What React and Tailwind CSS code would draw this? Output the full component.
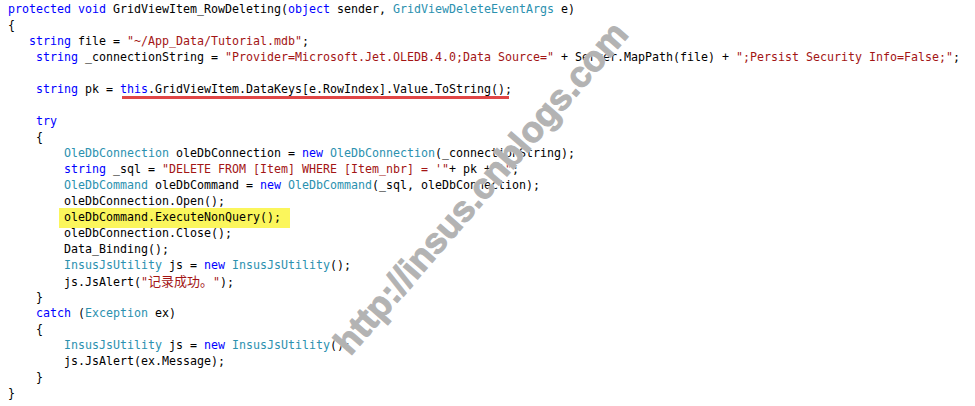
import React from "react";

const K = "text-[#0000ff]";
const T = "text-[#2b91af]";
const S = "text-[#a31515]";

// each line: indent + list of [text, colorClass]
const lines = [
  [0, [["protected void ", K], ["GridViewItem_RowDeleting(", ""], ["object", K], [" sender, ", ""], ["GridViewDeleteEventArgs", T], [" e)", ""]]],
  [0, [["{", ""]]],
  [3, [["string", K], [" file = ", ""], ['"~/App_Data/Tutorial.mdb"', S], [";", ""]]],
  [4, [["string", K], [" _connectionString = ", ""], ['"Provider=Microsoft.Jet.OLEDB.4.0;Data Source="', S], [" + Server.MapPath(file) + ", ""], ['";Persist Security Info=False;"', S], [";", ""]]],
  [0, []],
  [4, "pk"],
  [0, []],
  [4, [["try", K]]],
  [4, [["{", ""]]],
  [8, [["OleDbConnection", T], [" oleDbConnection = ", ""], ["new", K], [" ", ""], ["OleDbConnection", T], ["(_connectionString);", ""]]],
  [8, [["string", K], [" _sql = ", ""], ['"DELETE FROM [Item] WHERE [Item_nbr] = \'"', S], ["+ pk +", ""], ['"\'"', S], [";", ""]]],
  [8, [["OleDbCommand", T], [" oleDbCommand = ", ""], ["new", K], [" ", ""], ["OleDbCommand", T], ["(_sql, oleDbConnection);", ""]]],
  [8, [["oleDbConnection.Open();", ""]]],
  [8, "hl"],
  [8, [["oleDbConnection.Close();", ""]]],
  [8, [["Data_Binding();", ""]]],
  [8, [["InsusJsUtility", T], [" js = ", ""], ["new", K], [" ", ""], ["InsusJsUtility", T], ["();", ""]]],
  [8, "cjk"],
  [4, [["}", ""]]],
  [4, [["catch", K], [" (", ""], ["Exception", T], [" ex)", ""]]],
  [4, [["{", ""]]],
  [8, [["InsusJsUtility", T], [" js = ", ""], ["new", K], [" ", ""], ["InsusJsUtility", T], ["();", ""]]],
  [8, [["js.JsAlert(ex.Message);", ""]]],
  [4, [["}", ""]]],
  [0, [["}", ""]]],
];

function Line({ indent, tokens }) {
  let body;
  if (tokens === "pk") {
    body = (
      <>
        <span className={K}>string</span> pk ={" "}
        <span className="relative">
          <span className={K}>this</span>.GridViewItem.DataKeys[e.RowIndex].Value.ToString();
          <span className="absolute left-[2px] right-[3px] -bottom-[3px] h-[3px] bg-[#e04646]" />
        </span>
      </>
    );
  } else if (tokens === "hl") {
    body = (
      <span className="relative inline-block">
        <span className="absolute -left-[5px] -right-[9px] -top-[1px] -bottom-[3px] bg-[#fbf65c]" />
        <span className="relative">oleDbCommand.ExecuteNonQuery();</span>
      </span>
    );
  } else if (tokens === "cjk") {
    body = (
      <>
        js.JsAlert(
        <span className={S}>
          "
          <span className="text-[13px] font-['Noto_Sans_CJK_SC',sans-serif]">记录成功。</span>
          "
        </span>
        );
      </>
    );
  } else {
    body = tokens.map(([t, c], i) => (
      <span key={i} className={c}>
        {t}
      </span>
    ));
  }
  return (
    <div className="h-[16px] leading-[16px] whitespace-pre">
      {" ".repeat(indent)}
      {body}
    </div>
  );
}

export default function App() {
  return (
    <div className="relative w-[975px] h-[406px] overflow-hidden bg-white text-black">
      <div className="flex flex-col pl-[8px] pt-[1px] text-[11.63px] font-['DejaVu_Sans_Mono',monospace]">
        {lines.map(([indent, tokens], i) => (
          <Line key={i} indent={indent} tokens={tokens} />
        ))}
      </div>
      {/* watermark */}
      <div className="absolute left-[481px] top-[188px] -translate-x-1/2 -translate-y-1/2 -rotate-[49deg] whitespace-nowrap font-['Liberation_Sans',Arial,sans-serif] text-[36px] font-bold text-[#b3b3b3] [-webkit-text-stroke:1px_#b3b3b3] [text-shadow:0_0_2px_#fff,0_0_2px_#fff]">
        http://insus.cnblogs.com
      </div>
    </div>
  );
}
